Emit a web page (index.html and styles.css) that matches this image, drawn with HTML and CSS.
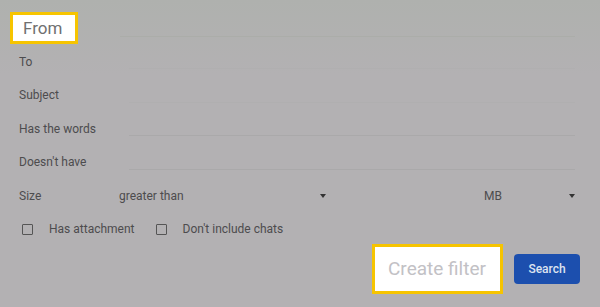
FILE: index.html
```html
<!DOCTYPE html>
<html lang="en">

<head>
  <meta charset="UTF-8">
  <meta name="viewport" content="width=device-width, initial-scale=1.0">
  <title>Search filter</title>
  <link rel="stylesheet" href="styles.css">
</head>

<body>

  <!-- filter form -->
  <div class="filter">

    <div class="row row-from">
      <div class="from-box">From</div>
      <div class="field field-from"></div>
    </div>

    <div class="row">
      <span class="label">To</span>
      <div class="field faint"></div>
    </div>

    <div class="row">
      <span class="label">Subject</span>
      <div class="field faint"></div>
    </div>

    <div class="row">
      <span class="label">Has the words</span>
      <div class="field"></div>
    </div>

    <div class="row">
      <span class="label">Doesn't have</span>
      <div class="field"></div>
    </div>

    <!-- size row -->
    <div class="row">
      <span class="label">Size</span>
      <div class="select select-op">
        <span>greater than</span>
        <span class="caret"></span>
      </div>
      <div class="spacer"></div>
      <div class="select select-unit">
        <span>MB</span>
        <span class="caret"></span>
      </div>
    </div>

    <!-- checkboxes -->
    <div class="row row-checks">
      <label class="check"><span class="box"></span>Has attachment</label>
      <label class="check"><span class="box"></span>Don't include chats</label>
    </div>

    <!-- buttons -->
    <div class="actions">
      <div class="create-box">Create filter</div>
      <button class="search-btn">Search</button>
    </div>

  </div>

</body>

</html>
```

FILE: styles.css
```css
/* page */
body {
  margin: 0;
  padding: 0;
  background: linear-gradient(#afb1ae 0, #b3b1b3 75px);
  font-family: Roboto, "Liberation Sans", Arial, sans-serif;
  color: #4d4c4e;
  height: 307px;
  overflow: hidden;
}

.filter {
  padding: 12px 25px 0 19px;
  display: flex;
  flex-direction: column;
}

/* rows */
.row {
  display: flex;
  align-items: center;
  height: 33.5px;
  font-size: 12px;
}

.row-from {
  height: 33px;
  align-items: flex-start;
  margin-left: -9px;
}

.label {
  width: 100px;
  flex: none;
}

.field {
  flex: 1;
  height: 23px;
  margin-left: 10px;
  border-bottom: 1px solid #aaa9aa;
  align-self: flex-start;
}

.field.faint {
  border-bottom-color: #b0afb0;
}

.field-from {
  margin-left: 42px;
  height: 24px;
  border-bottom-color: #abada9;
}

/* highlighted boxes */
.from-box {
  height: 26px;
  background: white;
  border: 3px solid #f6c400;
  color: #707070;
  font-size: 17px;
  line-height: 26px;
  padding-left: 10px;
  width: 52px;
}

/* size selects */
.select {
  display: flex;
  align-items: center;
  justify-content: space-between;
}

.select-op {
  width: 207px;
}

.select-unit {
  width: 91px;
}

.spacer {
  flex: 1;
}

.caret {
  width: 0;
  height: 0;
  border-left: 3.5px solid transparent;
  border-right: 3.5px solid transparent;
  border-top: 4px solid #333;
}

/* checkboxes */
.row-checks {
  height: 33px;
}

.check {
  display: flex;
  align-items: center;
  margin-left: 3px;
  margin-right: 18px;
}

.check .box {
  width: 9px;
  height: 9px;
  border: 1.5px solid #555;
  border-radius: 1px;
  margin-right: 16px;
}

/* buttons */
.actions {
  display: flex;
  justify-content: flex-end;
  align-items: center;
  gap: 11px;
  margin-top: -1.5px;
  margin-right: -5px;
}

.create-box {
  height: 44px;
  background: white;
  border: 3px solid #f6c400;
  color: #c2c1c5;
  font-size: 19px;
  line-height: 44px;
  padding-left: 13px;
  width: 112px;
}

.search-btn {
  width: 66px;
  height: 30px;
  background-color: #1c4fae;
  color: #dde3f0;
  border: none;
  border-radius: 4px;
  font-family: Roboto, "Liberation Sans", Arial, sans-serif;
  font-size: 12px;
  font-weight: 500;
  padding: 0;
}
```
